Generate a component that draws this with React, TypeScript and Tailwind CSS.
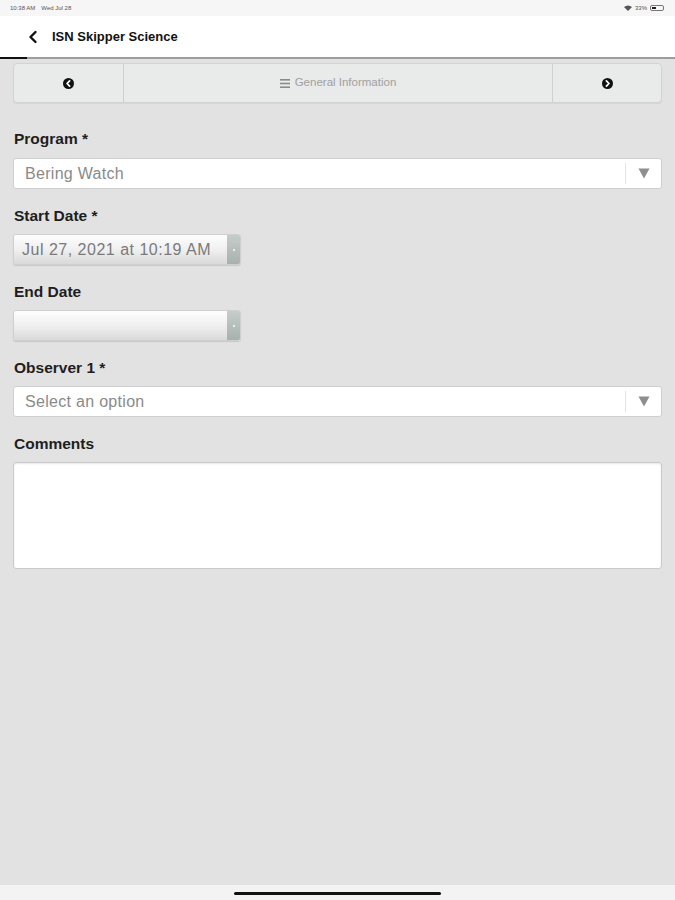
import React from "react";

const font = { fontFamily: '"Liberation Sans", Arial, sans-serif' };

function CircleChevron({ dir }: { dir: "left" | "right" }) {
  return (
    <svg width="11" height="11" viewBox="0 0 12 12">
      <circle cx="6" cy="6" r="6" fill="#111" />
      {dir === "left" ? (
        <path d="M7.2 3.2 L4.4 6 L7.2 8.8" stroke="#fff" strokeWidth="1.9" fill="none" strokeLinecap="round" strokeLinejoin="round" />
      ) : (
        <path d="M4.8 3.2 L7.6 6 L4.8 8.8" stroke="#fff" strokeWidth="1.9" fill="none" strokeLinecap="round" strokeLinejoin="round" />
      )}
    </svg>
  );
}

function Label({ children }: { children: React.ReactNode }) {
  return <div className="text-[15.5px] leading-[18px] h-[18px] font-bold text-[#1e1e1e] pl-[1px]">{children}</div>;
}

function SelectBox({ text, className }: { text: string; className?: string }) {
  return (
    <div className={"h-[31px] bg-white border border-[#cfcfcf] rounded-[3px] flex items-center " + (className ?? "")}>
      <div className="flex-1 pl-[11px] text-[16px] tracking-[0.3px] text-[#8a8a8a]">{text}</div>
      <div className="w-[36px] h-[21px] border-l border-[#e4e4e4] flex items-center justify-center">
        <svg width="12" height="11" viewBox="0 0 12 11">
          <path d="M0.5 0.5 H11.5 L6 10.5 Z" fill="#8e8e8e" />
        </svg>
      </div>
    </div>
  );
}

function DateBox({ text, className }: { text?: string; className?: string }) {
  return (
    <div className={"w-[228px] h-[31px] rounded-[3px] flex overflow-hidden border border-[#cfcfcf] shadow-[0_1px_1px_rgba(0,0,0,0.12)] " + (className ?? "")}>
      <div className="flex-1 bg-gradient-to-b from-[#fdfdfd] via-[#f0f0f0] to-[#d9d9d9] flex items-center pl-[8px] text-[16px] text-[#7a7a7a] tracking-[0.5px]">
        {text}
      </div>
      <div className="w-[13px] bg-gradient-to-b from-[#c5cdca] to-[#a7b1ad] flex items-center justify-center">
        <div className="w-[2px] h-[2px] bg-white rounded-full" />
      </div>
    </div>
  );
}

export default function App() {
  return (
    <div className="w-[675px] h-[900px] flex flex-col bg-[#e2e2e2]" style={font}>
      {/* status bar */}
      <div className="h-[16px] bg-[#f6f6f6] flex items-center justify-between px-[10px] text-[6px] text-[#555]">
        <div className="flex gap-[6px]">
          <span>10:38 AM</span>
          <span>Wed Jul 28</span>
        </div>
        <div className="flex items-center gap-[3px] pr-[1px]">
          <svg width="8" height="6" viewBox="0 0 8 6">
            <path d="M4 6 L0 2 Q4 -1 8 2 Z" fill="#555" />
          </svg>
          <span>33%</span>
          <div className="w-[14px] h-[6px] border border-[#777] rounded-[2px] flex p-[1px]">
            <div className="w-[4px] h-full bg-[#222]" />
          </div>
        </div>
      </div>
      {/* header */}
      <div className="h-[41px] bg-white flex items-center">
        <svg width="14" height="14" viewBox="0 0 14 14" className="ml-[26px]">
          <path d="M9.5 2 L4.5 7 L9.5 12" stroke="#111" strokeWidth="2.4" fill="none" strokeLinecap="round" strokeLinejoin="round" />
        </svg>
        <span className="ml-[12px] text-[13px] font-semibold text-[#111]">ISN Skipper Science</span>
      </div>
      <div className="h-[2px] bg-[#9d9d9d] flex">
        <div className="w-[27px] bg-[#111]" />
      </div>
      {/* content */}
      <div className="flex-1 flex flex-col px-[13px] pt-[4px]">
        <div className="h-[40px] bg-[#e9eaea] border border-[#d3d3d3] rounded-[4px] flex shadow-[0_1px_1px_rgba(0,0,0,0.06)]">
          <div className="w-[110px] flex items-center justify-center border-r border-[#d0d0d0]">
            <CircleChevron dir="left" />
          </div>
          <div className="flex-1 flex items-center justify-center gap-[5px] text-[11.5px] text-[#a0a0a0]">
            <svg width="10" height="9" viewBox="0 0 10 9">
              <rect x="0" y="0" width="10" height="1.6" fill="#8a8a8a" />
              <rect x="0" y="3.7" width="10" height="1.6" fill="#8a8a8a" />
              <rect x="0" y="7.4" width="10" height="1.6" fill="#8a8a8a" />
            </svg>
            <span>General Information</span>
          </div>
          <div className="w-[109px] flex items-center justify-center border-l border-[#d0d0d0]">
            <CircleChevron dir="right" />
          </div>
        </div>

        <div className="mt-[27px]">
          <Label>Program *</Label>
          <SelectBox text="Bering Watch" className="mt-[10px]" />
        </div>
        <div className="mt-[18px]">
          <Label>Start Date *</Label>
          <DateBox text="Jul 27, 2021 at 10:19 AM" className="mt-[9px]" />
        </div>
        <div className="mt-[18px]">
          <Label>End Date</Label>
          <DateBox className="mt-[9px]" />
        </div>
        <div className="mt-[18px]">
          <Label>Observer 1 *</Label>
          <SelectBox text="Select an option" className="mt-[9px]" />
        </div>
        <div className="mt-[18px]">
          <Label>Comments</Label>
          <div className="mt-[9px] h-[107px] bg-white border border-[#cacaca] rounded-[3px] shadow-[inset_0_1px_2px_rgba(0,0,0,0.1)]" />
        </div>
      </div>
      {/* home indicator */}
      <div className="h-[15px] bg-[#f3f3f3] flex justify-center pt-[7px]">
        <div className="w-[207px] h-[3px] bg-[#111] rounded-full" />
      </div>
    </div>
  );
}
